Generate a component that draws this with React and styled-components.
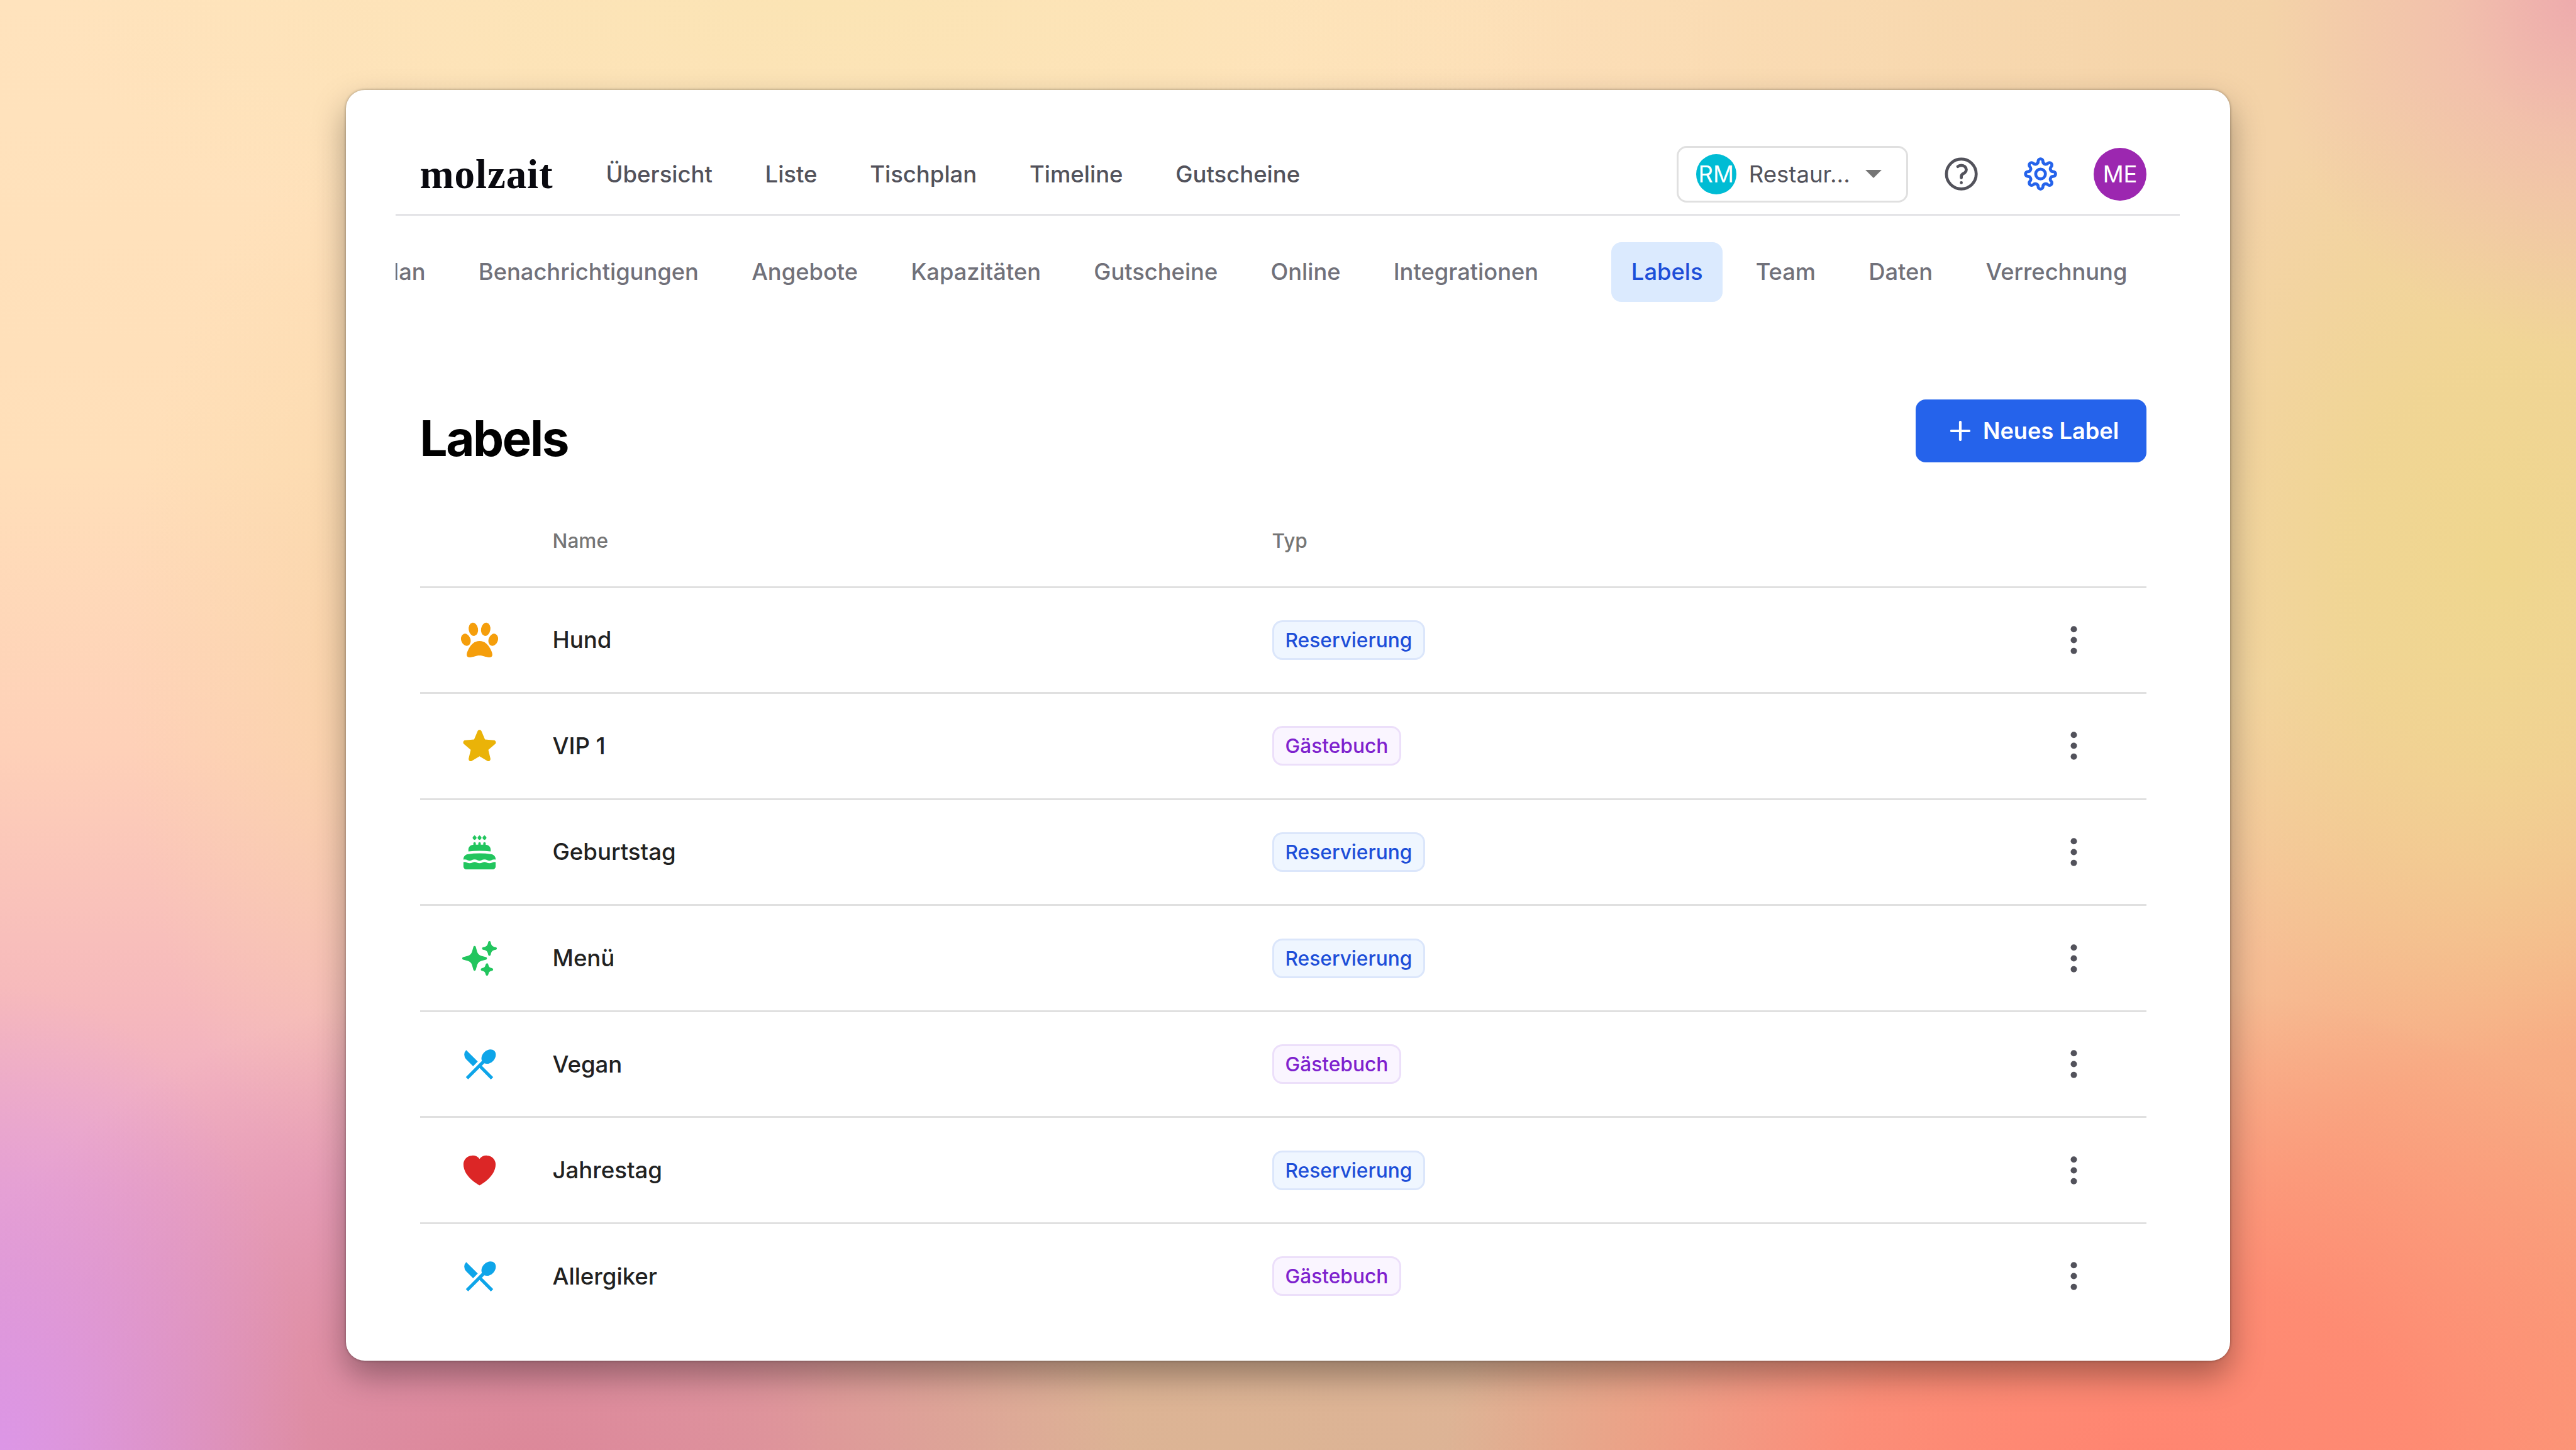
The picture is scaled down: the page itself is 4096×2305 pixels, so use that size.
import React from 'react';
import styled, { createGlobalStyle, css } from 'styled-components';
import { HiCake, HiHeart, HiSparkles, HiStar } from 'react-icons/hi2';
import { MdRestaurantMenu } from 'react-icons/md';

const sectionsLeft = [
  'Tischplan',
  'Benachrichtigungen',
  'Angebote',
  'Kapazitäten',
  'Gutscheine',
  'Online',
  'Integrationen',
];
const sectionsRight = ['Labels', 'Team', 'Daten', 'Verrechnung'];
const pages = ['Übersicht', 'Liste', 'Tischplan', 'Timeline', 'Gutscheine'];

// one tooth and the valley after it, repeated every 45 degrees
const gearPath = () => {
  const rotate = (x, y, deg) => {
    const a = (deg * Math.PI) / 180;
    const rx = x * Math.cos(a) - y * Math.sin(a);
    const ry = x * Math.sin(a) + y * Math.cos(a);
    return `${(12 + rx).toFixed(3)} ${(12 + ry).toFixed(3)}`;
  };
  let d = `M${rotate(-1.45, -7.65, 0)}`;
  for (let i = 0; i < 8; i += 1) {
    d += `A1.45 1.45 0 0 1 ${rotate(1.45, -7.65, i * 45)}`;
    d += `A1.7 1.7 0 0 0 ${rotate(-1.45, -7.65, (i + 1) * 45)}`;
  }
  return `${d}Z`;
};

const GearIcon = () => (
  <OutlineIcon viewBox="0 0 24 24" color="#2563eb">
    <path d={gearPath()} />
    <circle cx="12" cy="12" r="2.95" />
  </OutlineIcon>
);

const HelpIcon = () => (
  <OutlineIcon viewBox="0 0 24 24" color="#52525b">
    <circle cx="12" cy="12" r="9" />
    <path d="M9.879 7.519c1.171-1.025 3.071-1.025 4.242 0 1.172 1.025 1.172 2.687 0 3.712-.203.179-.43.326-.67.442-.745.361-1.45.999-1.45 1.827v.75M12 17.25h.008v.008H12v-.008Z" />
  </OutlineIcon>
);

const PawIcon = () => (
  <svg viewBox="-31.5 -31.5 63 63" fill="currentColor">
    <ellipse cx="-9.8" cy="-17.1" rx="7.4" ry="10.6" transform="rotate(-10 -9.8 -17.1)" />
    <ellipse cx="9.8" cy="-17.1" rx="7.4" ry="10.6" transform="rotate(10 9.8 -17.1)" />
    <ellipse cx="-21.8" cy="-0.5" rx="7.4" ry="9.9" transform="rotate(-20 -21.8 -0.5)" />
    <ellipse cx="21.8" cy="-0.5" rx="7.4" ry="9.9" transform="rotate(20 21.8 -0.5)" />
    <path d="M0 1.4C8.4 1.4 13.6 7 17 13.6C19 17.4 20.4 20.4 20.4 23.2C20.4 26.2 18.6 27.4 15.4 27.4C9.6 27.4 6 24.6 0 24.6C-6 24.6 -9.6 27.4 -15.4 27.4C-18.6 27.4 -20.4 26.2 -20.4 23.2C-20.4 20.4 -19 17.4 -17 13.6C-13.6 7 -8.4 1.4 0 1.4Z" />
  </svg>
);

const MoreIcon = () => (
  <svg viewBox="0 0 63 63" fill="currentColor">
    <circle cx="31.5" cy="14.2" r="5" />
    <circle cx="31.5" cy="31.5" r="5" />
    <circle cx="31.5" cy="48.8" r="5" />
  </svg>
);

const labels = [
  { name: 'Hund', type: 'Reservierung', icon: PawIcon, color: '#f59e0b' },
  { name: 'VIP 1', type: 'Gästebuch', icon: HiStar, color: '#eab308' },
  { name: 'Geburtstag', type: 'Reservierung', icon: HiCake, color: '#22c55e' },
  { name: 'Menü', type: 'Reservierung', icon: HiSparkles, color: '#22c55e' },
  { name: 'Vegan', type: 'Gästebuch', icon: MdRestaurantMenu, color: '#0ea5e9' },
  { name: 'Jahrestag', type: 'Reservierung', icon: HiHeart, color: '#dc2626' },
  { name: 'Allergiker', type: 'Gästebuch', icon: MdRestaurantMenu, color: '#0ea5e9' },
];

const LabelRow = ({ name, type, icon: Icon, color }) => (
  <Row>
    <LabelIcon $color={color}><Icon /></LabelIcon>
    <LabelName>{name}</LabelName>
    <div><Badge $guest={type === 'Gästebuch'}>{type}</Badge></div>
    <MoreButton><MoreIcon /></MoreButton>
  </Row>
);

export default function App() {
  return (
    <Desktop>
      <GlobalStyle />
      <Window>
        <Header>
          <Logo>molzait</Logo>
          <MainNav>
            {pages.map(page => <MainLink key={page}>{page}</MainLink>)}
          </MainNav>
          <Select>
            <SelectAvatar>RM</SelectAvatar>
            <SelectText>Restaur...</SelectText>
            <Caret viewBox="0 0 26 13"><path d="M0 0h26L13 13z" /></Caret>
          </Select>
          <HeaderIcons>
            <HelpIcon />
            <GearIcon />
          </HeaderIcons>
          <UserAvatar>ME</UserAvatar>
        </Header>
        <SubNav>
          {sectionsLeft.map(section => <SubLink key={section}>{section}</SubLink>)}
          <SubNavGap />
          {sectionsRight.map(section => (
            <SubLink key={section} $active={section === 'Labels'}>{section}</SubLink>
          ))}
        </SubNav>
        <Content>
          <TitleRow>
            <Title>Labels</Title>
            <NewButton>
              <Plus viewBox="0 0 32 32"><path d="M16 2v28M2 16h28" /></Plus>
              Neues Label
            </NewButton>
          </TitleRow>
          <TableHead>
            <span />
            <span>Name</span>
            <span>Typ</span>
          </TableHead>
          {labels.map(label => <LabelRow key={label.name} {...label} />)}
        </Content>
      </Window>
    </Desktop>
  );
}

const GlobalStyle = createGlobalStyle`
  *, *::before, *::after {
    box-sizing: border-box;
  }

  body {
    margin: 0;
    font-family: Inter, 'Liberation Sans', sans-serif;
  }
`;

const Desktop = styled.div`
  width: 100vw;
  height: 100vh;
  overflow: hidden;
  display: flex;
  align-items: center;
  justify-content: center;
  background:
    radial-gradient(ellipse 12% 32% at 0% 100%, #dc96e6 0%, rgba(220, 150, 228, 0.6) 40%, rgba(222, 150, 220, 0) 100%),
    radial-gradient(ellipse 27% 34% at 83% 102%, #ff8470 0%, rgba(255, 134, 112, 0.85) 42%, rgba(255, 144, 116, 0) 100%),
    radial-gradient(ellipse 24% 34% at 20% 102%, #dc8798 0%, rgba(222, 138, 154, 0.75) 42%, rgba(230, 150, 160, 0) 100%),
    radial-gradient(ellipse 32% 30% at 48% 100%, #dcb494 0%, rgba(222, 180, 148, 0.95) 50%, rgba(226, 176, 148, 0) 100%),
    radial-gradient(ellipse 12% 24% at 100% 0%, #eeabad 0%, rgba(240, 180, 174, 0.6) 40%, rgba(244, 196, 176, 0) 100%),
    radial-gradient(ellipse 15% 34% at 97% 39%, #efd68e 0%, rgba(239, 214, 142, 0.75) 40%, rgba(240, 210, 146, 0) 100%),
    radial-gradient(ellipse 34% 52% at 102% 94%, #f9a27c 0%, rgba(248, 166, 126, 0.82) 45%, rgba(244, 184, 134, 0) 100%),
    radial-gradient(ellipse 30% 20% at 32% 0%, #fbe4b4 0%, rgba(251, 228, 180, 0) 100%),
    radial-gradient(ellipse 9% 36% at 14% 46%, rgba(248, 214, 164, 0.6) 0%, rgba(248, 214, 164, 0) 100%),
    linear-gradient(90deg, rgba(243, 212, 168, 0) 50%, #f4d3a8 88%),
    linear-gradient(180deg, #ffe3bd 0%, #ffdfb9 32%, #fed0b8 52%, #f6b9bc 69%, #eca8c8 82%, #e09ccc 100%);
`;

const Window = styled.main`
  width: 2996px;
  height: 2020px;
  margin-right: 1px;
  border-radius: 30px;
  background: #fff;
  box-shadow: 0 0 4px rgba(0, 0, 0, 0.35), 0 24px 52px rgba(0, 0, 0, 0.34);
`;

const Header = styled.header`
  margin: 0 80px 0 79px;
  padding: 89px 52.5px 18px 39px;
  display: flex;
  align-items: center;
  border-bottom: 3px solid #e4e4e7;
`;

const Logo = styled.div`
  width: 296px;
  color: #09090f;
  font-family: 'Liberation Serif', serif;
  font-size: 65px;
  line-height: 90px;
  font-weight: 700;
  letter-spacing: 0.9px;
`;

const MainNav = styled.nav`
  flex: 1;
  display: flex;
  gap: 83.6px;
`;

const MainLink = styled.a`
  color: #52525b;
  font-size: 36.5px;
  font-weight: 500;
`;

const Select = styled.div`
  width: 368px;
  height: 90px;
  padding-left: 28px;
  display: flex;
  align-items: center;
  border: 3px solid #e0e0e0;
  border-radius: 16px;
`;

const avatar = css`
  flex: none;
  display: flex;
  align-items: center;
  justify-content: center;
  border-radius: 50%;
  color: #fff;
  font-size: 36.4px;
`;

const SelectAvatar = styled.div`
  ${avatar}
  width: 64px;
  height: 64px;
  background: #00bcd4;
`;

const SelectText = styled.span`
  width: 185px;
  margin-left: 20px;
  color: #52525b;
  font-size: 36.6px;
`;

const Caret = styled.svg`
  width: 26px;
  height: 13px;
  fill: #757575;
`;

const OutlineIcon = styled.svg`
  width: 63.2px;
  height: 63.2px;
  fill: none;
  stroke: ${p => p.color};
  stroke-width: 1.8;
  stroke-linecap: round;
  stroke-linejoin: round;
`;

const HeaderIcons = styled.div`
  margin: 0 52.5px 0 53px;
  display: flex;
  gap: 63.5px;
`;

const UserAvatar = styled.div`
  ${avatar}
  width: 84px;
  height: 84px;
  background: #9c27b0;
`;

const SubNav = styled.nav`
  height: 95px;
  margin: 42px 80px 0 79px;
  padding-right: 51.5px;
  display: flex;
  justify-content: flex-end;
  gap: 21px;
  overflow: hidden;
`;

const SubNavGap = styled.span`
  flex: none;
  width: 42.5px;
`;

const SubLink = styled.a`
  flex: none;
  padding: 0 31.6px;
  border-radius: 16px;
  background: ${p => (p.$active ? '#dbeafe' : 'transparent')};
  color: ${p => (p.$active ? '#1d4ed8' : '#71717a')};
  font-size: 36.3px;
  font-weight: 500;
  line-height: 95px;
`;

const Content = styled.section`
  padding: 155px 132.5px 0 118px;
`;

const TitleRow = styled.div`
  height: 100px;
  display: flex;
  align-items: center;
  justify-content: space-between;
`;

const Title = styled.h1`
  margin: 23px 0 0;
  color: #000;
  font-size: 78px;
  font-weight: 700;
  letter-spacing: -2.4px;
`;

const NewButton = styled.button`
  width: 367px;
  height: 100px;
  padding: 0 0 0 55px;
  display: flex;
  align-items: center;
  gap: 20px;
  border: none;
  border-radius: 16px;
  background: #2563eb;
  color: #fff;
  font-family: inherit;
  font-size: 36.2px;
  font-weight: 600;
  white-space: nowrap;
`;

const Plus = styled.svg`
  width: 32px;
  height: 32px;
  stroke: currentColor;
  stroke-width: 4.2;
  stroke-linecap: round;
`;

const columns = css`
  display: grid;
  grid-template-columns: 211px 1144px 1fr auto;
  align-items: center;
`;

const TableHead = styled.div`
  ${columns}
  height: 148px;
  margin-top: 52px;
  border-bottom: 3px solid #e0e0e0;
  color: #757575;
  font-size: 31.6px;
  font-weight: 500;
`;

const Row = styled.div`
  ${columns}
  height: 168.6px;
  border-bottom: 3px solid #e0e0e0;

  &:last-child {
    border-bottom-color: transparent;
  }
`;

const LabelIcon = styled.span`
  padding-left: 63.5px;
  display: flex;
  color: ${p => p.$color};

  & > svg {
    width: 63px;
    height: 63px;
  }
`;

const LabelName = styled.span`
  color: #212121;
  font-size: 36.6px;
  font-weight: 500;
`;

const Badge = styled.span`
  display: inline-block;
  height: 63px;
  padding: 0 18px;
  border: 3px solid ${p => (p.$guest ? '#ecdffa' : '#dbe6fb')};
  border-radius: 16px;
  background: ${p => (p.$guest ? '#faf5ff' : '#eff6ff')};
  color: ${p => (p.$guest ? '#7e22ce' : '#1d4ed8')};
  font-size: 31.7px;
  font-weight: 500;
  line-height: 57px;
  vertical-align: middle;
`;

const MoreButton = styled.span`
  padding-right: 84px;
  display: flex;
  color: #52525b;

  & > svg {
    width: 63px;
    height: 63px;
  }
`;
